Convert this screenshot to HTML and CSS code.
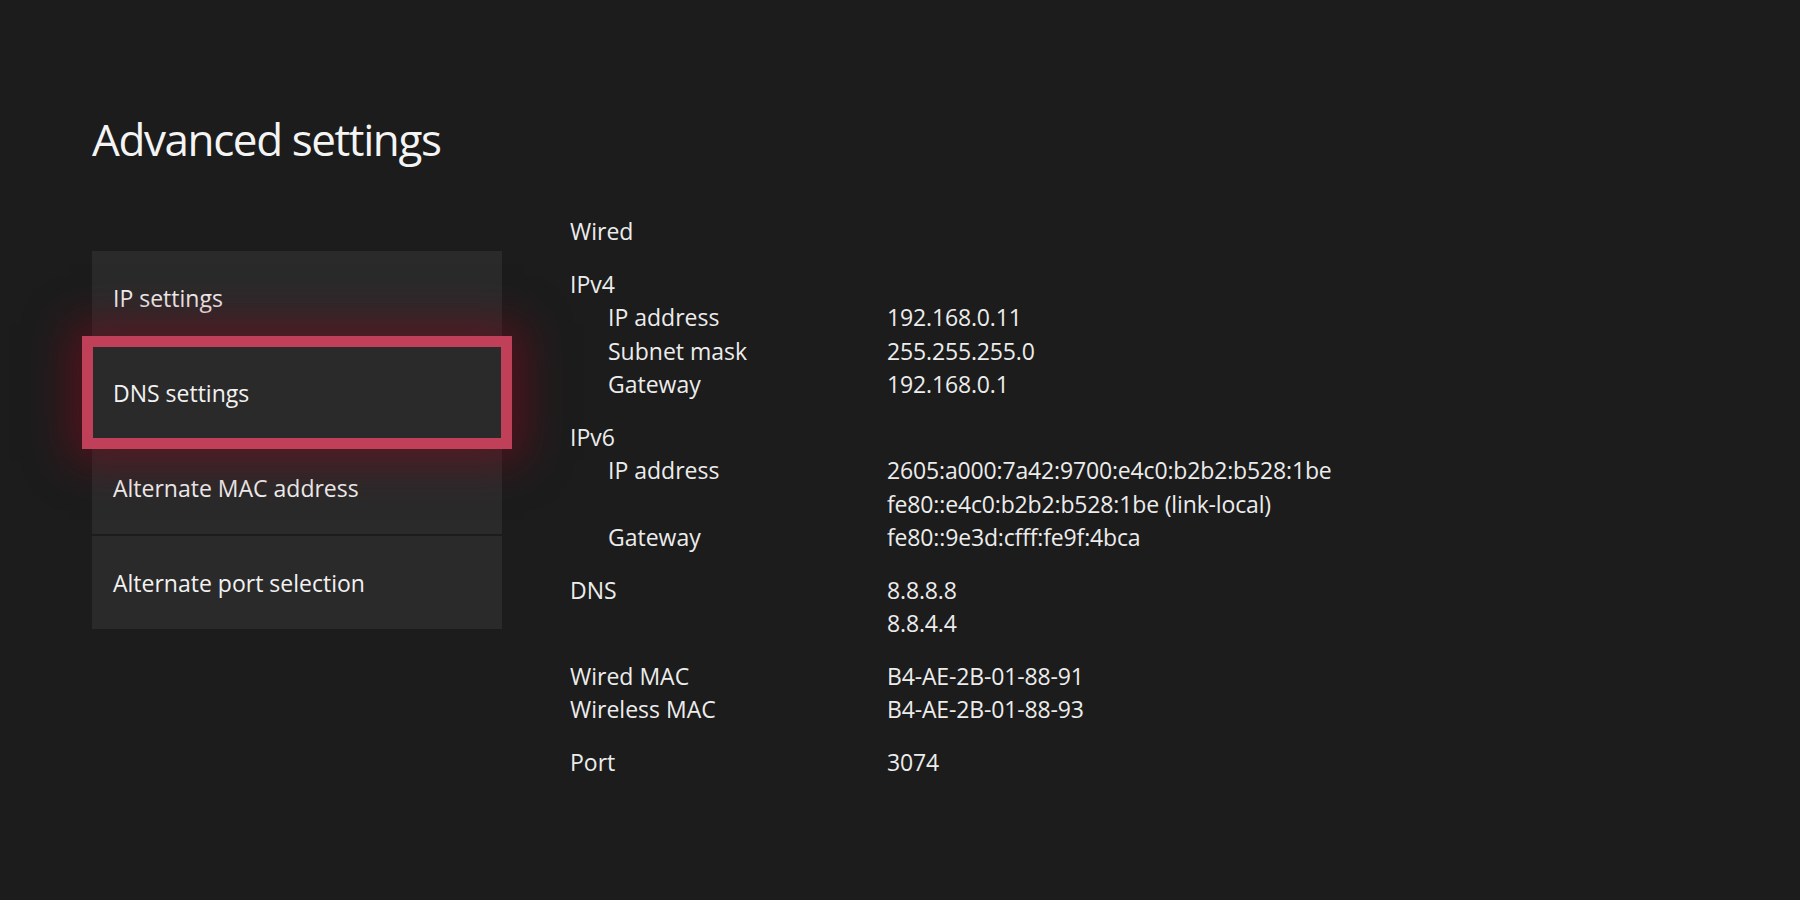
FILE: index.html
```html
<!DOCTYPE html>
<html lang="en">
<head>
<meta charset="utf-8">
<title>Advanced settings</title>
<link rel="stylesheet" href="styles.css">
</head>
<body>
<div class="page">
  <h1 class="title">Advanced settings</h1>
  <div class="main">
    <nav class="menu">
      <div class="item">IP settings</div>
      <div class="item focused">DNS settings</div>
      <div class="item">Alternate MAC address</div>
      <div class="item">Alternate port selection</div>
    </nav>
    <section class="details">
      <div class="group">
        <div class="row"><span class="label">Wired</span></div>
      </div>
      <div class="group">
        <div class="row"><span class="label">IPv4</span></div>
        <div class="row"><span class="label sub">IP address</span><span class="value">192.168.0.11</span></div>
        <div class="row"><span class="label sub">Subnet mask</span><span class="value">255.255.255.0</span></div>
        <div class="row"><span class="label sub">Gateway</span><span class="value">192.168.0.1</span></div>
      </div>
      <div class="group">
        <div class="row"><span class="label">IPv6</span></div>
        <div class="row"><span class="label sub">IP address</span><span class="value">2605:a000:7a42:9700:e4c0:b2b2:b528:1be</span></div>
        <div class="row"><span class="label sub"></span><span class="value">fe80::e4c0:b2b2:b528:1be (link-local)</span></div>
        <div class="row"><span class="label sub">Gateway</span><span class="value">fe80::9e3d:cfff:fe9f:4bca</span></div>
      </div>
      <div class="group">
        <div class="row"><span class="label">DNS</span><span class="value">8.8.8.8</span></div>
        <div class="row"><span class="label"></span><span class="value">8.8.4.4</span></div>
      </div>
      <div class="group">
        <div class="row"><span class="label">Wired MAC</span><span class="value">B4-AE-2B-01-88-91</span></div>
        <div class="row"><span class="label">Wireless MAC</span><span class="value">B4-AE-2B-01-88-93</span></div>
      </div>
      <div class="group">
        <div class="row"><span class="label">Port</span><span class="value">3074</span></div>
      </div>
    </section>
  </div>
</div>
</body>
</html>
```

FILE: styles.css
```css
html, body {
  margin: 0;
  height: 100%;
}

body {
  background: #1c1c1c;
  color: #f0f0f0;
  font-family: "Open Sans", "Noto Sans", "DejaVu Sans", sans-serif;
  overflow: hidden;
}

.page {
  padding: 111px 0 0 92px;
}

.title {
  margin: 0;
  font-size: 44px;
  font-weight: 400;
  line-height: 57px;
  color: #f4f4f4;
  letter-spacing: -1.4px;
}

.main {
  display: flex;
  align-items: flex-start;
  margin-top: 47px;
}

.menu {
  width: 410px;
  margin-top: 36px;
  display: flex;
  flex-direction: column;
  gap: 2px;
}

.item {
  height: 93px;
  background: #2a2a2a;
  display: flex;
  align-items: center;
  padding-left: 21px;
  font-size: 23px;
  color: #f2f2f2;
}

.item.focused {
  position: relative;
  z-index: 1;
}

.item.focused::after {
  content: "";
  position: absolute;
  inset: -10px;
  border: 11px solid #c0405a;
  box-shadow: 0 0 40px 12px rgba(120, 12, 30, 0.6);
  pointer-events: none;
}

.details {
  margin-left: 68px;
  font-size: 23px;
  line-height: 33.5px;
  color: #ececec;
}

.group + .group {
  margin-top: 19px;
}

.row {
  display: flex;
}

.label {
  width: 317px;
  flex: none;
  box-sizing: border-box;
}

.label.sub {
  padding-left: 38px;
}

.value {
  white-space: nowrap;
  letter-spacing: -0.15px;
}
```
